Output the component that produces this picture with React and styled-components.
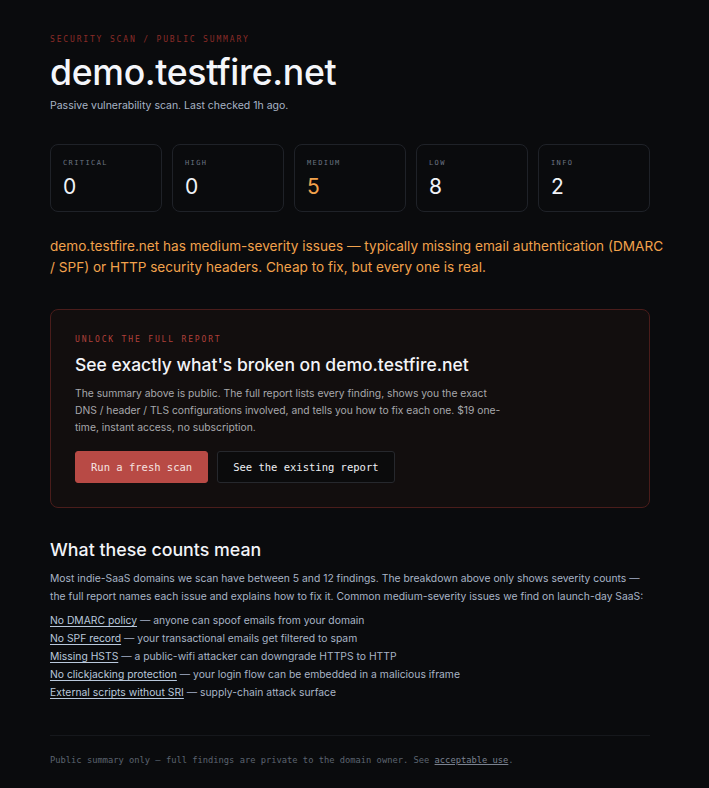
import React from 'react';
import styled, { createGlobalStyle } from 'styled-components';

const GlobalStyle = createGlobalStyle`
  html, body {
    margin: 0;
    background: #0a0b0d;
  }
  body {
    font-family: Inter, "Noto Sans", sans-serif;
    color: #e8ecf2;
  }
`;

const counts = [
  { label: 'CRITICAL', value: 0 },
  { label: 'HIGH', value: 0 },
  { label: 'MEDIUM', value: 5, accent: true },
  { label: 'LOW', value: 8 },
  { label: 'INFO', value: 2 },
];

const issues = [
  ['No DMARC policy', 'anyone can spoof emails from your domain'],
  ['No SPF record', 'your transactional emails get filtered to spam'],
  ['Missing HSTS', 'a public-wifi attacker can downgrade HTTPS to HTTP'],
  ['No clickjacking protection', 'your login flow can be embedded in a malicious iframe'],
  ['External scripts without SRI', 'supply-chain attack surface'],
];

const App = () => {
  return (
    <>
      <GlobalStyle />
      <Page>
        <Eyebrow>Security scan / public summary</Eyebrow>
        <Title>demo.testfire.net</Title>
        <Sub>Passive vulnerability scan. Last checked 1h ago.</Sub>

        <CountGrid>
          {counts.map((c) => (
            <CountCard key={c.label}>
              <CountLabel>{c.label}</CountLabel>
              <CountValue $accent={c.accent}>{c.value}</CountValue>
            </CountCard>
          ))}
        </CountGrid>

        <Verdict>
          demo.testfire.net has medium-severity issues — typically missing email authentication (DMARC
          / SPF) or HTTP security headers. Cheap to fix, but every one is real.
        </Verdict>

        <Unlock>
          <Eyebrow $bright>Unlock the full report</Eyebrow>
          <UnlockTitle>See exactly what's broken on demo.testfire.net</UnlockTitle>
          <UnlockText>
            The summary above is public. The full report lists every finding, shows you the exact
            DNS / header / TLS configurations involved, and tells you how to fix each one. $19 one-time,
            instant access, no subscription.
          </UnlockText>
          <Actions>
            <Button $primary>Run a fresh scan</Button>
            <Button>See the existing report</Button>
          </Actions>
        </Unlock>

        <SectionTitle>What these counts mean</SectionTitle>
        <Body>
          Most indie-SaaS domains we scan have between 5 and 12 findings. The breakdown above only
          shows severity counts — the full report names each issue and explains how to fix it. Common
          medium-severity issues we find on launch-day SaaS:
        </Body>
        <IssueList>
          {issues.map(([name, desc]) => (
            <li key={name}>
              <IssueLink href="#">{name}</IssueLink> — {desc}
            </li>
          ))}
        </IssueList>

        <Footer>
          Public summary only — full findings are private to the domain owner. See{' '}
          <FooterLink href="#">acceptable use</FooterLink>.
        </Footer>
      </Page>
    </>
  );
};

export default App;

const mono = `"DejaVu Sans Mono", "Liberation Mono", monospace`;

const Page = styled.main`
  width: 600px;
  margin: 0 0 0 50px;
  padding: 35px 0 20px;
`;

const Eyebrow = styled.div`
  font-family: ${mono};
  font-size: 8px;
  letter-spacing: 0.23em;
  text-transform: uppercase;
  color: ${(p) => (p.$bright ? '#b0403a' : '#8a2c28')};
  line-height: 10px;
`;

const Title = styled.h1`
  margin: 5px 0 0;
  font-size: 35.7px;
  font-weight: 500;
  letter-spacing: -0.01em;
  line-height: 44px;
  color: #f4f6fa;
`;

const Sub = styled.p`
  margin: 5px 0 0;
  font-size: 10.5px;
  line-height: 14px;
  color: #a8b4c6;
`;

const CountGrid = styled.div`
  display: grid;
  grid-template-columns: repeat(5, 1fr);
  gap: 10px;
  margin-top: 31px;
`;

const CountCard = styled.div`
  height: 68px;
  box-sizing: border-box;
  border: 1px solid #1f2228;
  border-radius: 8px;
  padding: 14px 12px 0;
`;

const CountLabel = styled.div`
  font-family: ${mono};
  font-size: 7px;
  letter-spacing: 0.2em;
  color: #6b7482;
  line-height: 8px;
`;

const CountValue = styled.div`
  margin-top: 7px;
  font-size: 21px;
  line-height: 26px;
  color: ${(p) => (p.$accent ? '#f2a24c' : '#f0f3f8')};
`;

const Verdict = styled.p`
  margin: 24px 0 0;
  width: 615px;
  font-size: 13.6px;
  line-height: 21px;
  color: #f2a24c;
`;

const Unlock = styled.section`
  margin-top: 31px;
  border: 1px solid #4a1d1b;
  border-radius: 8px;
  background: #120e0e;
  padding: 25px 24px 24px;
`;

const UnlockTitle = styled.h2`
  margin: 8px 0 0;
  font-size: 17.5px;
  font-weight: 500;
  line-height: 24px;
  color: #f2f4f8;
`;

const UnlockText = styled.p`
  margin: 8px 0 0;
  max-width: 432px;
  font-size: 10.3px;
  line-height: 17px;
  color: #a7a8ac;
`;

const Actions = styled.div`
  display: flex;
  gap: 9px;
  margin-top: 15px;
`;

const Button = styled.button`
  height: 32px;
  padding: 0 15px;
  border-radius: 3px;
  font-family: ${mono};
  font-size: 10.5px;
  cursor: pointer;
  border: 1px solid ${(p) => (p.$primary ? '#b84a45' : '#26282d')};
  background: ${(p) => (p.$primary ? '#b84a45' : '#0b0b0c')};
  color: ${(p) => (p.$primary ? '#f6e4e2' : '#eef0f4')};
`;

const SectionTitle = styled.h2`
  margin: 30px 0 0;
  font-size: 17.8px;
  font-weight: 500;
  line-height: 24px;
  color: #f2f4f8;
`;

const Body = styled.p`
  margin: 7px 0 0;
  font-size: 10.35px;
  line-height: 18px;
  color: #a8b4c6;
`;

const IssueList = styled.ul`
  list-style: none;
  margin: 6px 0 0;
  padding: 0;
  font-size: 10.35px;
  line-height: 18px;
  color: #a8b4c6;
`;

const IssueLink = styled.a`
  color: #b9c8dc;
  text-decoration: underline;
  text-underline-offset: 2px;
`;

const Footer = styled.footer`
  margin-top: 34px;
  border-top: 1px solid #16181c;
  padding-top: 18px;
  font-family: ${mono};
  font-size: 8.75px;
  line-height: 12px;
  color: #5c6470;
`;

const FooterLink = styled.a`
  color: #7a8290;
  text-decoration: underline;
`;
